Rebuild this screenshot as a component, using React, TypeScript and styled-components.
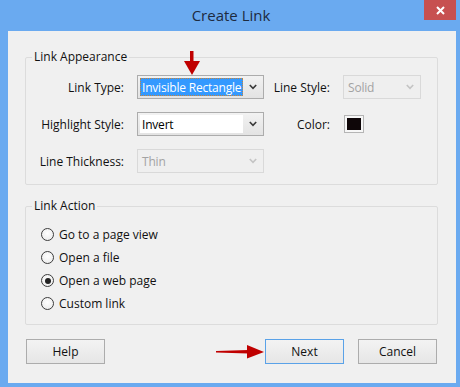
import React from 'react';
import styled, { createGlobalStyle } from 'styled-components';

type DropState = 'focus' | 'edit' | 'disabled';

const GlobalStyle = createGlobalStyle`
  html, body {
    margin: 0;
    padding: 0;
    background: #6AAAF0;
  }
  body {
    font-family: 'Open Sans', 'Noto Sans', 'DejaVu Sans', sans-serif;
    font-size: 12px;
    color: #000000;
  }
`

const Chevron = ({ color }: { color: string }) => (
  <svg width="8" height="6" viewBox="0 0 8 6">
    <path d="M0.8 1 L4 4.4 L7.2 1" fill="none" stroke={color} strokeWidth="1.6" />
  </svg>
)

const Dropdown = ({ value, state, children }: { value: string; state: DropState; children?: React.ReactNode }) => (
  <DropBox $state={state}>
    <DropField $state={state}>{value}</DropField>
    <DropButton $state={state}>
      <Chevron color={state === 'disabled' ? '#C4C4C4' : '#3A3A3A'} />
    </DropButton>
    {children}
  </DropBox>
)

const Radio = ({ label, checked }: { label: string; checked?: boolean }) => (
  <RadioRow>
    <RadioCircle>{checked && <RadioDot />}</RadioCircle>
    {label}
  </RadioRow>
)

const App = () => {
  return (
    <>
      <GlobalStyle />
      <Window>
        <TitleBar>
          <Title>Create Link</Title>
          <CloseButton>
            <svg width="9" height="9" viewBox="0 0 9 9">
              <path d="M1 1 L8 8 M8 1 L1 8" stroke="#FFFFFF" strokeWidth="2" />
            </svg>
          </CloseButton>
        </TitleBar>
        <Client>
          <Group>
            <Legend>Link Appearance</Legend>
            <FormGrid>
              <Label>Link Type:</Label>
              <Dropdown value="Invisible Rectangle" state="focus">
                <DownArrow width="16" height="24" viewBox="0 0 16 24">
                  <rect x="6" y="0" width="3.5" height="11" fill="#C00000" />
                  <path d="M0 10 L16 10 L8 24 Z" fill="#C00000" />
                </DownArrow>
              </Dropdown>
              <Label>Line Style:</Label>
              <Dropdown value="Solid" state="disabled" />
              <Label>Highlight Style:</Label>
              <Dropdown value="Invert" state="edit" />
              <Label>Color:</Label>
              <ColorSwatch>
                <ColorFill />
              </ColorSwatch>
              <Label>Line Thickness:</Label>
              <Dropdown value="Thin" state="disabled" />
            </FormGrid>
          </Group>
          <Group $gap={13}>
            <Legend>Link Action</Legend>
            <RadioList>
              <Radio label="Go to a page view" />
              <Radio label="Open a file" />
              <Radio label="Open a web page" checked />
              <Radio label="Custom link" />
            </RadioList>
          </Group>
          <ButtonRow>
            <Button>Help</Button>
            <Spacer />
            <svg width="48" height="14" viewBox="0 0 48 14">
              <path d="M0 6 L32 5 L32 8.5 L0 7.5 Z" fill="#C00000" />
              <path d="M31 0 L48 7 L31 13.5 Z" fill="#C00000" />
            </svg>
            <Button $primary>Next</Button>
            <Button>Cancel</Button>
          </ButtonRow>
        </Client>
      </Window>
    </>
  )
}

const Window = styled.div`
  width: 460px;
  height: 387px;
  background: #6AAAF0;
  display: flex;
  flex-direction: column;
  overflow: hidden;
`
const TitleBar = styled.div`
  height: 31px;
  flex-shrink: 0;
  display: grid;
  grid-template-columns: 1fr auto 1fr;
  align-items: start;
`
const Title = styled.div`
  grid-column: 2;
  font-size: 15px;
  line-height: 31px;
  color: #1D2B3F;
  padding-left: 2px;
`
const CloseButton = styled.div`
  grid-column: 3;
  justify-self: end;
  margin-right: 4px;
  width: 32px;
  height: 20px;
  background: #C75050;
  display: flex;
  align-items: center;
  justify-content: center;
`
const Client = styled.div`
  flex: 1;
  margin: 0 4px 4px 8px;
  background: #F0F0F0;
  padding: 18px 18px 0 17px;
  display: flex;
  flex-direction: column;
`
const Group = styled.fieldset<{ $gap?: number }>`
  margin: ${p => p.$gap ?? 0}px 0 0 0;
  padding: 0;
  border: 1px solid #DCDCDC;
  border-radius: 2px;
  min-width: 0;
`
const Legend = styled.legend`
  margin-left: 6px;
  padding: 0 2px;
  font-size: 12px;
  line-height: 16px;
  color: #111111;
`
const FormGrid = styled.div`
  display: grid;
  grid-template-columns: 111px 127px 79px 78px;
  grid-auto-rows: 24px;
  row-gap: 13px;
  align-items: center;
  padding: 10px 0 11px 0;
`
const Label = styled.div`
  text-align: right;
  padding-right: 13px;
  white-space: nowrap;
  color: #111111;
`
const DropBox = styled.div<{ $state: DropState }>`
  position: relative;
  height: 24px;
  box-sizing: border-box;
  display: flex;
  border: 1px solid ${p => (p.$state === 'disabled' ? '#D9D9D9' : '#ACACAC')};
  background: ${p => (p.$state === 'disabled' ? '#EFEFEF' : 'linear-gradient(#F2F2F2, #E3E3E3)')};
`
const DropField = styled.div<{ $state: DropState }>`
  flex: 1;
  margin: 2px 0 2px 2px;
  padding-left: 2px;
  display: flex;
  align-items: center;
  white-space: nowrap;
  overflow: hidden;
  box-sizing: border-box;
  letter-spacing: -0.2px;
  color: ${p => (p.$state === 'focus' ? '#FFFFFF' : p.$state === 'disabled' ? '#A3A3A3' : '#000000')};
  background: ${p => (p.$state === 'focus' ? '#3399FF' : p.$state === 'edit' ? '#FFFFFF' : 'transparent')};
  outline: ${p => (p.$state === 'focus' ? '1px dotted #C8843A' : 'none')};
  outline-offset: -1px;
`
const DropButton = styled.div<{ $state: DropState }>`
  width: 20px;
  display: flex;
  align-items: center;
  justify-content: center;
`
const DownArrow = styled.svg`
  position: absolute;
  left: 46px;
  top: -25px;
`
const ColorSwatch = styled.div`
  justify-self: start;
  margin-left: 1px;
  width: 20px;
  height: 18px;
  box-sizing: border-box;
  border: 1px solid #B5B5B5;
  padding: 2px;
  background: #F7F7F7;
`
const ColorFill = styled.div`
  width: 100%;
  height: 100%;
  background: #0E0608;
`
const RadioList = styled.div`
  display: flex;
  flex-direction: column;
  padding: 9px 0 9px 15px;
`
const RadioRow = styled.div`
  height: 23px;
  display: flex;
  align-items: center;
  gap: 5px;
  color: #111111;
`
const RadioCircle = styled.span`
  width: 13px;
  height: 13px;
  box-sizing: border-box;
  border-radius: 50%;
  border: 1px solid #3D3D3D;
  background: radial-gradient(circle at 50% 40%, #FFFFFF, #E8E8E8);
  display: flex;
  align-items: center;
  justify-content: center;
`
const RadioDot = styled.span`
  width: 6px;
  height: 6px;
  border-radius: 50%;
  background: #222222;
`
const ButtonRow = styled.div`
  display: flex;
  align-items: center;
  margin: 14px 1px 0 1px;
`
const Spacer = styled.div`
  flex: 1;
`
const Button = styled.div<{ $primary?: boolean }>`
  width: 79px;
  height: 25px;
  box-sizing: border-box;
  display: flex;
  align-items: center;
  justify-content: center;
  border: 1px solid ${p => (p.$primary ? '#5AA2E8' : '#ACACAC')};
  background: linear-gradient(#F3F3F3, #E6E6E6);
  color: #111111;
  margin-left: ${p => (p.$primary ? '1px' : '14px')};
  &:first-child {
    margin-left: 0;
  }
`

export default App
